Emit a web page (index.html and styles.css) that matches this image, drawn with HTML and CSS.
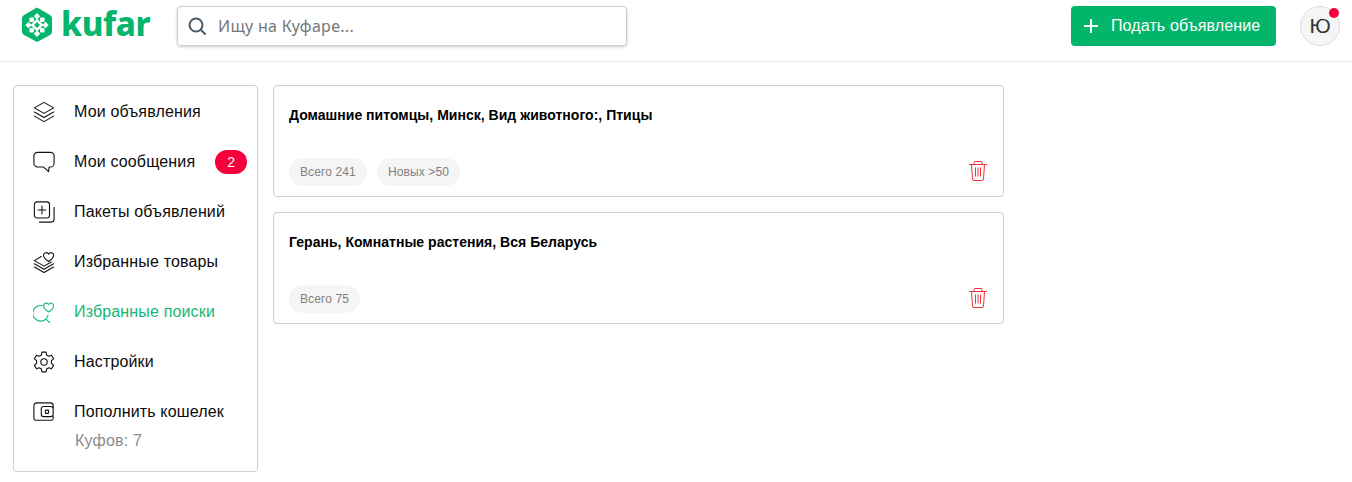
FILE: index.html
```html
<!DOCTYPE html>
<html lang="ru">
<head>
<meta charset="utf-8">
<title>Kufar</title>
<link rel="stylesheet" href="styles.css">
</head>
<body>
<header class="header">
  <a class="logo">
    <svg class="logo-mark" width="32" height="36" viewBox="0 0 32 36">
      <path d="M16 .5L29 8q2 1.200 2 3.500v13q0 2.300-2 3.500L16 35 3 28q-2-1.200-2-3.500v-13Q1 9.200 3 8z" fill="#05b56c"/>
      <g fill="#fff">
        <path d="M16 11.500l6.500 6.500-6.500 6.500L9.500 18z"/>
        <path d="M16 6l3.200 3.200L16 12.400l-3.200-3.200z"/>
        <path d="M16 23.600l3.200 3.200-3.200 3.200-3.200-3.200z"/>
        <path d="M7.500 14.800l3.200 3.200-3.200 3.200L4.300 18z"/>
        <path d="M24.500 14.800l3.200 3.200-3.200 3.200-3.200-3.200z"/>
        <rect x="8.500" y="10.500" width="4.500" height="4.500" rx=".8"/>
        <rect x="19" y="10.500" width="4.500" height="4.500" rx=".8"/>
        <rect x="8.500" y="21" width="4.500" height="4.500" rx=".8"/>
        <rect x="19" y="21" width="4.500" height="4.500" rx=".8"/>
      </g>
      <path d="M16 15l3 3-3 3-3-3z" fill="#05b56c"/>
    </svg>
    <span class="logo-text">kufar</span>
  </a>
  <div class="search">
    <svg width="20" height="20" viewBox="0 0 20 20" fill="none" stroke="#4a5a66" stroke-width="2" stroke-linecap="round"><circle cx="9" cy="9" r="6.500"/><path d="M14 14l4 4"/></svg>
    <span class="search-text">Ищу на Куфаре...</span>
  </div>
  <a class="submit">
    <svg width="16" height="16" viewBox="0 0 16 16" stroke="#fff" stroke-width="2"><path d="M8 1v14M1 8h14"/></svg>
    <span>Подать объявление</span>
  </a>
  <div class="avatar">Ю<i class="dot"></i></div>
</header>
<main class="page">
  <nav class="side">
    <a class="item">
      <svg class="ic" viewBox="0 0 24 24"><path d="M12 1.500l10.500 6-10.500 6-10.500-6z"/><path d="M1.500 12L12 18l10.500-6"/><path d="M1.500 16.500L12 22.500l10.500-6"/></svg>
      <span>Мои объявления</span>
    </a>
    <a class="item">
      <svg class="ic" viewBox="0 0 24 24"><path d="M5 1.500h14a4 4 0 0 1 4 4v8a4 4 0 0 1-4 4h-1.500l-.5 5-5.500-5H5a4 4 0 0 1-4-4v-8a4 4 0 0 1 4-4z"/></svg>
      <span>Мои сообщения</span>
      <b class="badge">2</b>
    </a>
    <a class="item">
      <svg class="ic" viewBox="0 0 24 24"><rect x="1.500" y="1" width="16.500" height="17.500" rx="3"/><path d="M9.750 5.500v8.500M5.500 9.750h8.500"/><path d="M23 7v13a3 3 0 0 1-3 3H7"/></svg>
      <span>Пакеты объявлений</span>
    </a>
    <a class="item">
      <svg class="ic" viewBox="0 0 24 24"><path d="M9 6L1.500 10.500l10.500 6 8-4.500"/><path d="M1.500 14L12 20l10.500-6"/><path d="M1.500 17.500L12 23.500l10.500-6"/><path d="M17 11.500c-3-2-5.500-4-5.500-6.800 0-3 4-4 5.500-1.300 1.500-2.700 5.500-1.700 5.500 1.300 0 2.800-2.500 4.800-5.500 6.800z"/></svg>
      <span>Избранные товары</span>
    </a>
    <a class="item active">
      <svg class="ic" viewBox="0 0 24 24"><path d="M10 5.100A8.500 8.500 0 1 0 16.500 15.500"/><path d="M14.500 20l4 4"/><path d="M17 12c-3-2-5.500-4-5.500-6.800 0-3 4-4 5.500-1.300 1.500-2.700 5.500-1.700 5.500 1.300 0 2.800-2.500 4.800-5.500 6.800z"/></svg>
      <span>Избранные поиски</span>
    </a>
    <a class="item">
      <svg class="ic" viewBox="0 0 24 24"><circle cx="12" cy="12" r="3.500"/><path d="M9.710 1.240h4.580l.51 3.060 2.470 1.420 2.900-1.080 2.290 3.960-2.390 1.980v2.840l2.390 1.980-2.290 3.960-2.900-1.080-2.470 1.420-.51 3.060H9.710l-.51-3.060-2.470-1.420-2.900 1.080-2.290-3.960 2.390-1.980v-2.840L1.540 8.600l2.290-3.960 2.900 1.080L9.200 4.300z"/></svg>
      <span>Настройки</span>
    </a>
    <a class="item wallet">
      <svg class="ic" viewBox="0 0 24 24"><path d="M4 2h15a3 3 0 0 1 3 3v2"/><path d="M4 2a3 3 0 0 0-3 3v14a2 2 0 0 0 2 2h17a2 2 0 0 0 2-2v-2"/><rect x="9" y="6" width="13" height="11" rx="2.500"/><rect x="13.500" y="10" width="3.500" height="3.500" rx=".8"/></svg>
      <span>Пополнить кошелек</span>
    </a>
    <div class="balance">Куфов: 7</div>
  </nav>
  <section class="cards">
    <article class="card">
      <h3 class="card-title">Домашние питомцы, Минск, Вид животного:, Птицы</h3>
      <div class="card-foot">
        <span class="chip">Всего 241</span>
        <span class="chip">Новых &gt;50</span>
        <svg class="trash" viewBox="0 0 20 22"><path d="M1 4.500h18M6 4.500V2.500a1 1 0 0 1 1-1h6a1 1 0 0 1 1 1v2M3.500 4.500l1 14.500a1.500 1.500 0 0 0 1.500 1.500h8a1.500 1.500 0 0 0 1.500-1.500l1-14.500M7.500 7.500v9M10 7.500v9M12.500 7.500v9"/></svg>
      </div>
    </article>
    <article class="card">
      <h3 class="card-title">Герань, Комнатные растения, Вся Беларусь</h3>
      <div class="card-foot">
        <span class="chip">Всего 75</span>
        <svg class="trash" viewBox="0 0 20 22"><path d="M1 4.500h18M6 4.500V2.500a1 1 0 0 1 1-1h6a1 1 0 0 1 1 1v2M3.500 4.500l1 14.500a1.500 1.500 0 0 0 1.500 1.500h8a1.500 1.500 0 0 0 1.500-1.500l1-14.500M7.500 7.500v9M10 7.500v9M12.500 7.500v9"/></svg>
      </div>
    </article>
  </section>
</main>
</body>
</html>
```
FILE: styles.css
```css
* { box-sizing: border-box; }
html, body { margin: 0; height: 100%; }
body {
  background: #fff;
  color: #0c0c0c;
  font-family: "Liberation Sans", Arial, sans-serif;
  overflow: hidden;
}
.header {
  display: flex;
  align-items: center;
  height: 62px;
  padding: 0 12px 9px 21px;
  border-bottom: 1px solid #e8e8e8;
}
.logo { display: flex; align-items: center; width: 156px; flex: none; gap: 8px; }
.logo-mark { flex: none; margin-bottom: 3px; }
.logo-text {
  margin-bottom: 4px;
  color: #05b56c;
  font-family: "Noto Sans", sans-serif;
  font-size: 33px;
  font-weight: 800;
  line-height: 36px;
  letter-spacing: -.4px;
}
.search {
  display: flex;
  align-items: center;
  gap: 11px;
  width: 450px;
  height: 40px;
  padding-left: 9px;
  border: 1px solid #c9cdd1;
  border-radius: 4px;
  box-shadow: 0 1px 3px rgba(0, 0, 0, .2);
}
.search-text {
  color: #74787d;
  font-family: "Noto Sans", sans-serif;
  font-size: 16px;
  letter-spacing: .3px;
}
.submit {
  display: flex;
  align-items: center;
  gap: 12px;
  width: 205px;
  height: 40px;
  margin-left: auto;
  padding-left: 12px;
  border-radius: 4px;
  background: #03b56b;
  color: #fff;
  font-size: 16px;
  letter-spacing: .12px;
}
.avatar {
  position: relative;
  display: flex;
  align-items: center;
  justify-content: center;
  width: 40px;
  height: 40px;
  margin-left: 24px;
  border: 1px solid #dcdcdc;
  border-radius: 50%;
  background: #f5f5f6;
  color: #333;
  font-size: 21px;
}
.dot {
  position: absolute;
  top: 1px;
  right: 0;
  width: 10px;
  height: 10px;
  border-radius: 50%;
  background: #f5003c;
}
.page {
  display: flex;
  align-items: flex-start;
  gap: 15px;
  padding: 23px 0 0 13px;
}
.side {
  width: 245px;
  height: 387px;
  flex: none;
  padding-top: 1px;
  border: 1px solid #cfcfcf;
  border-radius: 4px;
}
.item {
  display: flex;
  align-items: center;
  height: 50px;
  padding-left: 19px;
  font-size: 16px;
  letter-spacing: .15px;
}
.item span { margin-left: 19px; }
.ic {
  width: 22px;
  height: 22px;
  flex: none;
  fill: none;
  stroke: #111;
  stroke-width: 1.200;
  stroke-linejoin: round;
  stroke-linecap: round;
}
.active { color: #13b873; }
.active .ic { stroke: #13b873; }
.badge {
  width: 32px;
  height: 24px;
  margin-left: 20px;
  border-radius: 12px;
  background: #f5003c;
  color: #fff;
  font-size: 14px;
  font-weight: 400;
  line-height: 24px;
  text-align: center;
}
.balance { margin: -6px 0 0 61px; color: #8c8c8c; font-size: 16px; line-height: 20px; letter-spacing: .2px; }
.cards { display: flex; flex-direction: column; gap: 15px; width: 731px; }
.card {
  display: flex;
  flex-direction: column;
  justify-content: space-between;
  height: 112px;
  padding: 21px 15px 10px;
  border: 1px solid #cfcfd3;
  border-radius: 4px;
}
.card-title { margin: 0; color: #000; font-size: 14px; font-weight: 700; line-height: 17px; letter-spacing: .025px; }
.card-foot { display: flex; align-items: center; gap: 10px; }
.chip {
  height: 28px;
  padding: 0 11px;
  border-radius: 14px;
  background: #f5f5f6;
  color: #808080;
  font-size: 12px;
  line-height: 28px;
  letter-spacing: .12px;
}
.trash {
  width: 20px;
  height: 22px;
  margin: 0 0 2px auto;
  fill: none;
  stroke: #f5303c;
  stroke-width: 1;
}
```
